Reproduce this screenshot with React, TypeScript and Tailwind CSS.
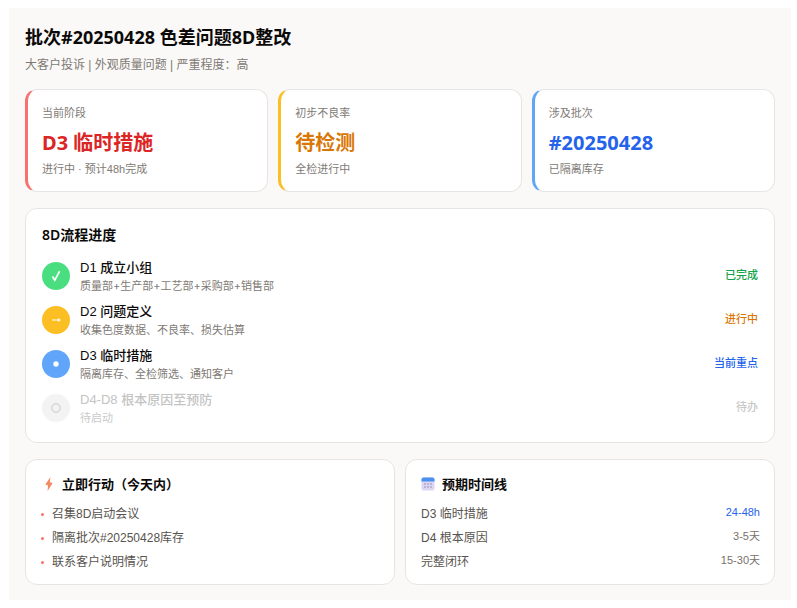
import React from "react";

const stats = [
  { label: "当前阶段", value: "D3 临时措施", note: "进行中 · 预计48h完成", border: "border-l-[#f87171]", color: "text-[#dc2626]" },
  { label: "初步不良率", value: "待检测", note: "全检进行中", border: "border-l-[#fbbf24]", color: "text-[#d97706]" },
  { label: "涉及批次", value: "#20250428", note: "已隔离库存", border: "border-l-[#60a5fa]", color: "text-[#2563eb]" },
];

const CheckIcon = () => (
  <svg width="10" height="12" viewBox="0 0 10 12">
    <path d="M1.5 6.5 L3.8 10.2 L8.6 1.2" fill="none" stroke="white" strokeWidth="1.7" />
  </svg>
);

const ArrowIcon = () => (
  <svg width="10" height="8" viewBox="0 0 10 8">
    <path d="M1 4 H8.5 M7 2.6 L8.8 4 L7 5.4" fill="none" stroke="white" strokeWidth="1.1" />
  </svg>
);

const DotIcon = () => (
  <svg width="6" height="6" viewBox="0 0 6 6">
    <circle cx="3" cy="3" r="2.7" fill="white" />
  </svg>
);

const RingIcon = () => (
  <svg width="10" height="10" viewBox="0 0 10 10">
    <circle cx="5" cy="5" r="4.2" fill="none" stroke="#bdbdbd" strokeWidth="0.8" />
  </svg>
);

const steps = [
  { icon: <CheckIcon />, circle: "bg-[#4ade80]", title: "D1 成立小组", desc: "质量部+生产部+工艺部+采购部+销售部", status: "已完成", statusColor: "text-[#16a34a]" },
  { icon: <ArrowIcon />, circle: "bg-[#fbbf24]", title: "D2 问题定义", desc: "收集色度数据、不良率、损失估算", status: "进行中", statusColor: "text-[#d97706]" },
  { icon: <DotIcon />, circle: "bg-[#60a5fa]", title: "D3 临时措施", desc: "隔离库存、全检筛选、通知客户", status: "当前重点", statusColor: "text-[#2563eb]" },
  { icon: <RingIcon />, circle: "bg-[#f3f3f4]", title: "D4-D8 根本原因至预防", desc: "待启动", status: "待办", statusColor: "text-[#c8c8c8]", muted: true },
];

const actions = ["召集8D启动会议", "隔离批次#20250428库存", "联系客户说明情况"];

const timeline = [
  { name: "D3 临时措施", time: "24-48h", color: "text-[#2563eb]" },
  { name: "D4 根本原因", time: "3-5天", color: "text-[#78716c]" },
  { name: "完整闭环", time: "15-30天", color: "text-[#78716c]" },
];

const Bolt = () => (
  <svg width="8" height="14" viewBox="0 0 8 14" className="shrink-0">
    <path d="M5.4 0 L0.4 7.6 L3 8.4 L2.6 14 L7.6 6 L4.8 5.2 Z" fill="#f4895f" />
  </svg>
);

const Calendar = () => (
  <svg width="14" height="14" viewBox="0 0 14 14" className="shrink-0">
    <rect x="0.5" y="0.5" width="13" height="13" rx="2" fill="#ddd6f3" />
    <path d="M0.5 4.5 V2.5 a2 2 0 0 1 2-2 h9 a2 2 0 0 1 2 2 V4.5 Z" fill="#4a90ee" />
    <g fill="#b9b3d6">
      <rect x="3" y="6" width="2" height="2" />
      <rect x="6" y="6" width="2" height="2" />
      <rect x="9" y="6" width="2" height="2" />
      <rect x="3" y="9" width="2" height="2" />
      <rect x="6" y="9" width="2" height="2" />
      <rect x="9" y="9" width="2" height="2" />
    </g>
  </svg>
);

export default function App() {
  return (
    <div className="bg-white pt-2 pl-[9px] pr-[6px] font-['Liberation_Sans','Noto_Sans_CJK_SC',sans-serif] text-[#1c1917]">
      <div className="h-[592px] bg-[#faf9f8] p-4">
        {/* 标题 */}
        <h1 className="font-['Noto_Sans','Noto_Sans_CJK_SC',sans-serif] text-lg leading-[26px] font-bold text-[#0c0a09]">批次#20250428 色差问题8D整改</h1>
        <p className="mt-[6px] text-xs leading-[18px] text-[#807a75]">大客户投诉 | 外观质量问题 | 严重程度：高</p>

        <div className="mt-[15px] grid grid-cols-3 gap-2.5">
          {stats.map((s) => (
            <div key={s.label} className={`h-[103px] rounded-xl border border-[#e7e5e4] border-l-[3px] bg-white px-3.5 pt-[15px] ${s.border}`}>
              <div className="text-[11px] leading-4 text-[#807a75]">{s.label}</div>
              <div className={`mt-[8px] font-['Noto_Sans','Noto_Sans_CJK_SC',sans-serif] text-xl leading-7 font-bold ${s.color}`}>{s.value}</div>
              <div className="mt-[4px] text-[11px] leading-4 text-[#807a75]">{s.note}</div>
            </div>
          ))}
        </div>

        {/* 流程 */}
        <div className="mt-4 h-[235px] rounded-xl border border-[#e7e5e4] bg-white px-4 pt-4">
          <h2 className="font-['Noto_Sans','Noto_Sans_CJK_SC',sans-serif] text-sm leading-5 font-semibold text-[#0c0a09]">8D流程进度</h2>
          <div className="mt-[13px] flex flex-col gap-[9px]">
            {steps.map((s) => (
              <div key={s.title} className="flex h-[35px] items-center gap-2.5">
                <div className={`flex h-7 w-7 shrink-0 items-center justify-center rounded-full ${s.circle}`}>{s.icon}</div>
                <div className="flex-1 pt-[2px]">
                  <div className={`text-[13px] leading-[18px] font-medium ${s.muted ? "text-[#c4c4c4]" : "text-[#0c0a09]"}`}>{s.title}</div>
                  <div className={`font-['Inter','Noto_Sans_CJK_SC',sans-serif] text-[11px] leading-[18px] ${s.muted ? "text-[#cacaca]" : "text-[#807a75]"}`}>{s.desc}</div>
                </div>
                <div className={`text-[11px] font-medium ${s.statusColor}`}>{s.status}</div>
              </div>
            ))}
          </div>
        </div>

        <div className="mt-4 grid grid-cols-2 gap-2.5">
          <div className="h-[126px] rounded-xl border border-[#e7e5e4] bg-white px-[15px] pt-4">
            <div className="flex h-4 items-center gap-[9px] pl-[4px]">
              <Bolt />
              <h3 className="font-['Noto_Sans','Noto_Sans_CJK_SC',sans-serif] text-[13px] leading-4 font-semibold text-[#0c0a09]">立即行动（今天内）</h3>
            </div>
            <ul className="mt-[14px] flex flex-col gap-2">
              {actions.map((a) => (
                <li key={a} className="flex h-4 items-center gap-2 text-xs text-[#57534e]">
                  <span className="h-[3px] w-[3px] rounded-full bg-[#f87171]" />
                  {a}
                </li>
              ))}
            </ul>
          </div>
          <div className="h-[126px] rounded-xl border border-[#e7e5e4] bg-white pr-3.5 pl-[15px] pt-4">
            <div className="flex h-4 items-center gap-[7px]">
              <Calendar />
              <h3 className="font-['Noto_Sans','Noto_Sans_CJK_SC',sans-serif] text-[13px] leading-4 font-semibold text-[#0c0a09]">预期时间线</h3>
            </div>
            <div className="mt-[14px] flex flex-col gap-2">
              {timeline.map((t) => (
                <div key={t.name} className="flex h-4 items-start justify-between text-xs leading-4 text-[#57534e]">
                  <span>{t.name}</span>
                  <span className={`text-[11px] leading-[13px] ${t.color}`}>{t.time}</span>
                </div>
              ))}
            </div>
          </div>
        </div>
      </div>
    </div>
  );
}
